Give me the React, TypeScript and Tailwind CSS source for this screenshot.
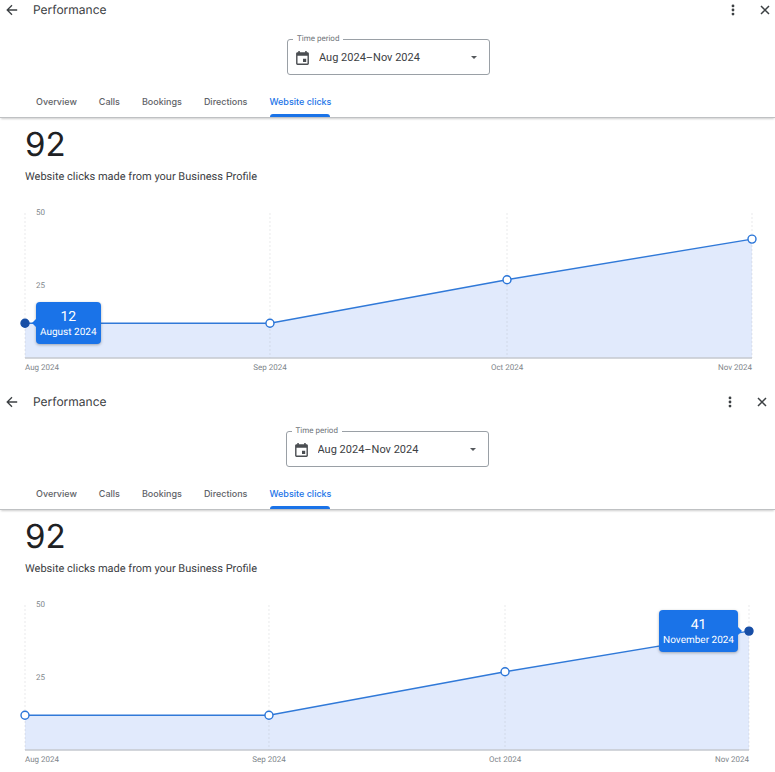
import { useId } from "react";

type Point = { day: number; value: number; label: string; full: string };

const POINTS: Point[] = [
  { day: 0, value: 12, label: "Aug 2024", full: "August 2024" },
  { day: 31, value: 12, label: "Sep 2024", full: "September 2024" },
  { day: 61, value: 27, label: "Oct 2024", full: "October 2024" },
  { day: 92, value: 41, label: "Nov 2024", full: "November 2024" },
];
const LAST_DAY = 92;
const MAX = 50;
const TABS = ["Overview", "Calls", "Bookings", "Directions", "Website clicks"];

const xPct = (p: Point) => `${(p.day / LAST_DAY) * 100}%`;
const yPct = (p: Point) => `${(1 - p.value / MAX) * 100}%`;

function Chart({ active }: { active: number }) {
  const line = POINTS.map((p) => `${p.day},${MAX - p.value}`).join(" ");
  const current = POINTS[active];
  const onRight = current.day > LAST_DAY / 2;
  return (
    <div className="font-['Roboto',sans-serif] text-[#80868b]">
      <div className="relative h-[145px]">
        <svg className="block h-full w-full overflow-visible" role="img" aria-label="Website clicks by month">
          <svg width="100%" height="100%" viewBox={`0 0 ${LAST_DAY} ${MAX}`} preserveAspectRatio="none" className="overflow-visible">
            <polygon points={`0,${MAX} ${line} ${LAST_DAY},${MAX}`} fill="#e1eafc" />
          </svg>
          {POINTS.map((p) => (
            <line key={p.label} x1={xPct(p)} x2={xPct(p)} y1="0" y2="100%" stroke="#9aa0a6" strokeOpacity="0.22" strokeWidth="1" strokeDasharray="2 2" />
          ))}
          <line x1="0" x2="100%" y1="100%" y2="100%" stroke="#c4c8cf" strokeWidth="1.5" />
          <svg width="100%" height="100%" viewBox={`0 0 ${LAST_DAY} ${MAX}`} preserveAspectRatio="none" className="overflow-visible">
            <polyline points={line} fill="none" stroke="#3079d8" strokeWidth="1.4" vectorEffect="non-scaling-stroke" />
          </svg>
          {POINTS.map((p, i) => (
            <circle
              key={p.label}
              cx={xPct(p)}
              cy={yPct(p)}
              r={4}
              fill={i === active ? "#174ea6" : "#fff"}
              stroke={i === active ? "#174ea6" : "#2a75d8"}
              strokeWidth="1.4"
            />
          ))}
        </svg>
        <span className="absolute top-0 left-[11px] -translate-y-1/2 text-[8px] leading-3">50</span>
        <span className="absolute top-1/2 left-[11px] -translate-y-1/2 text-[8px] leading-3">25</span>
        <div
          className={`absolute flex h-[42px] -translate-y-1/2 flex-col items-center rounded-[4px] bg-[#1a73e8] px-1 pt-[7px] whitespace-nowrap text-white shadow-[0_1px_3px_rgba(60,64,67,0.4)] ${onRight ? "right-[11px]" : "left-[11px]"}`}
          style={{ top: yPct(current) }}
        >
          <span className="text-[14px] leading-4">{current.value}</span>
          <span className="text-[10px] leading-4">{current.full}</span>
          <svg className={`absolute top-[17px] h-2 w-1 ${onRight ? "-right-1 -scale-x-100" : "-left-1"}`} viewBox="0 0 4 8" aria-hidden="true">
            <path d="M4 0 0 4l4 4z" fill="#1a73e8" />
          </svg>
        </div>
      </div>
      <div className="relative flex h-5 items-center justify-between text-[8px] leading-3">
        {POINTS.map((p, i) =>
          i === 0 || i === POINTS.length - 1 ? (
            <span key={p.label}>{p.label}</span>
          ) : (
            <span key={p.label} className="absolute -translate-x-1/2" style={{ left: xPct(p) }}>
              {p.label}
            </span>
          ),
        )}
      </div>
    </div>
  );
}

function Panel({ active, narrow = false }: { active: number; narrow?: boolean }) {
  const id = useId();
  const edge = narrow ? "pr-[3px]" : "";
  return (
    <section className="text-[#3c4043]">
      <div className={edge}>
        <header className="flex h-[19px] items-center pl-[6px]">
          <button type="button" aria-label="Back" className="flex">
            <svg className="h-3 w-3" viewBox="0 0 12 12" fill="none" stroke="#3c4043" strokeWidth="1.3" aria-hidden="true">
              <path d="M11.2 6H1.4M6 1.2 1.2 6 6 10.8" />
            </svg>
          </button>
          <h1 className="ml-[15px] flex-1 font-['Inter',sans-serif] text-[12px] leading-4">Performance</h1>
          <button type="button" aria-label="More options" className="flex">
            <svg className="h-3 w-3" viewBox="0 0 12 12" fill="#3c4043" aria-hidden="true">
              <circle cx="6" cy="1.9" r="1.4" />
              <circle cx="6" cy="6" r="1.4" />
              <circle cx="6" cy="10.1" r="1.4" />
            </svg>
          </button>
          <button type="button" aria-label="Close" className="mr-1 ml-5 flex">
            <svg className="h-3 w-3" viewBox="0 0 12 12" fill="none" stroke="#3c4043" strokeWidth="1.5" aria-hidden="true">
              <path d="m2 2 8 8M10 2l-8 8" />
            </svg>
          </button>
        </header>

        <div className="flex justify-center pt-[14px] pl-[2px] font-['Roboto',sans-serif]">
          <fieldset className="h-[42px] w-[203px] rounded-[3px] border border-[#9aa0a6] px-[5px]">
            <legend className="px-1 text-[8px] leading-3 text-[#70757a]">
              <label htmlFor={id}>Time period</label>
            </legend>
            <div className="flex h-[25px] items-center">
              <svg className="ml-[3px] h-[14px] w-[13px] shrink-0" viewBox="0 0 13 14" aria-hidden="true">
                <path
                  fill="#4a4d51"
                  fillRule="evenodd"
                  d="M2.3 0h1.5v1.3h5.4V0h1.5v1.3h.8c.8 0 1.4.6 1.4 1.4v9.8c0 .8-.6 1.4-1.4 1.4h-10C.7 13.9.1 13.3.1 12.5V2.7c0-.8.6-1.4 1.4-1.4h.8zM1.5 4.8v7.7h10V4.8zM7 7.8h3.2V11H7z"
                />
              </svg>
              <select id={id} className="ml-[10px] min-w-0 flex-1 appearance-none bg-transparent text-[11px] leading-4 text-[#3c4043]">
                <option>Aug 2024–Nov 2024</option>
              </select>
              <svg className="mr-[7px] h-[3px] w-[6px]" viewBox="0 0 6 3" aria-hidden="true">
                <path d="M0 0h6L3 3z" fill="#55585c" />
              </svg>
            </div>
          </fieldset>
        </div>
      </div>

      <nav className="mt-[12px] flex h-[31px] gap-[22px] border-b border-[#bfc1c3] pl-9 font-['Inter',sans-serif] text-[9px] leading-3 font-medium text-[#5f6368] shadow-[0_2px_2px_-1px_rgba(0,0,0,0.2)]">
        {TABS.map((tab) => {
          const selected = tab === "Website clicks";
          return (
            <button
              key={tab}
              type="button"
              aria-current={selected ? "page" : undefined}
              className={`relative h-full ${selected ? "text-[#1a73e8]" : ""}`}
            >
              {tab}
              {selected && <span className="absolute inset-x-px bottom-0 h-[3px] rounded-t-[3px] bg-[#1a73e8]" />}
            </button>
          );
        })}
      </nav>

      <div className={edge}>
        <div className="pr-[23px] pl-[25px]">
          <p className="pt-[6px] font-['Inter',sans-serif] text-[33px] leading-10 text-[#202124]">92</p>
          <p className="mt-[5px] mb-[28px] font-['Roboto',sans-serif] text-[11px] leading-4 text-[#3c4043]">
            Website clicks made from your Business Profile
          </p>
          <Chart active={active} />
        </div>
      </div>
    </section>
  );
}

export default function App() {
  return (
    <main className="flex flex-col gap-[14px] overflow-hidden bg-white [text-rendering:geometricPrecision]">
      <Panel active={0} />
      <Panel active={3} narrow />
    </main>
  );
}
